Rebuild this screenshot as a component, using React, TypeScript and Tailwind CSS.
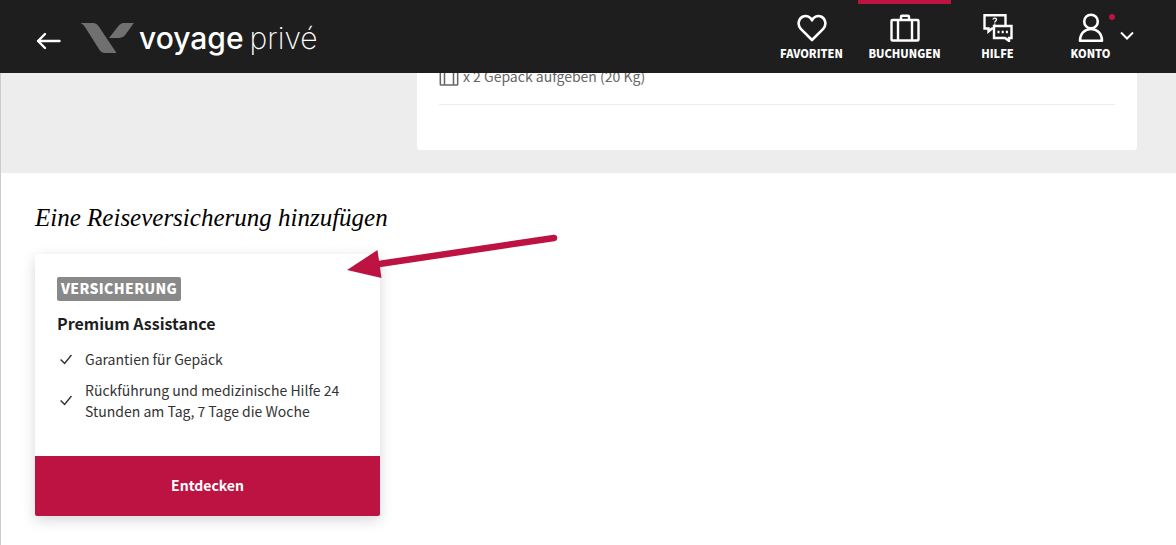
import type { ReactNode } from "react";

const guarantees = [
  "Garantien für Gepäck",
  "Rückführung und medizinische Hilfe 24 Stunden am Tag, 7 Tage die Woche",
];

const HeartIcon = () => (
  <svg width="30" height="28" viewBox="0 0 30 28" fill="none" stroke="currentColor" strokeWidth="2.6" strokeLinejoin="round">
    <path d="M15 26 3.800 14.800C0 10.800 1.500 4.400 6 2.500 9.800 1 13.600 3 15 6.300 16.400 3 20.200 1 24 2.500c4.500 1.900 6 8.300 2.200 12.300L15 26Z" />
  </svg>
);

const SuitcaseIcon = ({ className }: { className?: string }) => (
  <svg className={className} viewBox="0 0 30 28" fill="none" stroke="currentColor" strokeWidth="2.4" strokeLinejoin="round">
    <rect x="1.500" y="6" width="27" height="20.500" rx="1" />
    <path d="M8 6v20M22 6v20M11 6V2.700a1 1 0 0 1 1-1h6a1 1 0 0 1 1 1V6" />
  </svg>
);

const HelpIcon = () => (
  <svg width="30" height="28" viewBox="0 0 30 28" fill="none" stroke="currentColor" strokeWidth="2.400">
    <path d="M11 14.500H9L5.500 17.500v-3h-4V1.200H22.500V11" />
    <path d="M11 12h17.500v12H26v3L22 24H11V12Z" />
    <path d="M10 5.500c.3-2 3.600-1.800 3.500.1 0 1.400-1.800 1.300-1.800 3M11.700 9.500v1.300" strokeWidth="1.400" />
    <path d="M14.500 18h2M18.700 18h2M22.900 18h2" />
  </svg>
);

const AccountIcon = () => (
  <svg width="30" height="30" viewBox="0 0 30 30" fill="none" stroke="currentColor" strokeWidth="2.600" strokeLinejoin="round">
    <circle cx="15" cy="8.500" r="6.800" />
    <path d="M4 27.800c0-7.300 5-11.800 11-11.800s11 4.500 11 11.800H4Z" />
  </svg>
);

const CheckIcon = () => (
  <svg className="w-3 h-3 shrink-0" viewBox="0 0 12 12" fill="none" stroke="#333333" strokeWidth="1.500">
    <path d="m.6 5.500 4 4L11.500 1" />
  </svg>
);

const NavItem = ({
  label,
  active,
  children,
}: {
  label: string;
  active?: boolean;
  children: ReactNode;
}) => (
  <a
    href="#"
    aria-current={active ? "page" : undefined}
    className={`relative flex flex-col items-center w-[93px] pt-2 border-t-4 ${
      active ? "border-[#bd1342]" : "border-transparent"
    }`}
  >
    <span className="flex items-center h-8">{children}</span>
    <span className="text-[11px] leading-[18px] font-black">{label}</span>
  </a>
);

const Header = () => (
  <header className="relative z-10 h-[73px] flex justify-between bg-[#1e1e1e] text-white pl-9 pr-[39px]">
    <div className="flex items-end gap-5 pb-5">
      <button type="button" aria-label="Zurück" className="pb-[3px]">
        <svg width="25" height="18" viewBox="0 0 25 18" fill="none" stroke="currentColor" strokeWidth="2.400" strokeLinecap="round" strokeLinejoin="round">
          <path d="M23.500 9H2M9 2 2 9l7 7" />
        </svg>
      </button>
      <a href="#" className="flex items-center gap-1">
        <svg width="54" height="30" viewBox="0 0 54 30" fill="#707070" aria-hidden="true">
          <path d="M-1 0H12.500Q15.500 0 17.500 3L35.500 30H24Q20.500 30 18.500 27L4 4Q2 .8-1 0Z" />
          <path d="M53 0H42.500Q39.500 0 37 3.500L28 15H38.500Q42 15 44 12.200L50 4Q51.500 1.500 53 0Z" />
        </svg>
        <span className="flex gap-[6px] font-['Inter'] text-[30px] leading-[30px]">
          <span className="font-medium">voyage</span>
          <span className="font-extralight">privé</span>
        </span>
      </a>
    </div>
    <nav className="flex">
      <NavItem label="FAVORITEN">
        <HeartIcon />
      </NavItem>
      <NavItem label="BUCHUNGEN" active>
        <SuitcaseIcon className="w-[30px] h-7" />
      </NavItem>
      <NavItem label="HILFE">
        <HelpIcon />
      </NavItem>
      <NavItem label="KONTO">
        <AccountIcon />
        <span className="absolute top-[10px] right-[22px] size-[6px] rounded-full bg-[#bd1342]" />
        <svg className="absolute top-[27px] right-[3px]" width="14" height="9" viewBox="0 0 14 9" fill="none" stroke="currentColor" strokeWidth="2">
          <path d="m1 1.500 6 6 6-6" />
        </svg>
      </NavItem>
    </nav>
  </header>
);

const InsuranceCard = () => (
  <article className="w-[345px] rounded-xs overflow-hidden bg-white shadow-[0_4px_14px_rgba(0,0,0,0.16)]">
    <div className="px-[22px] pt-[23px] pb-[34px]">
      <span className="inline-block rounded-xs bg-[#898989] px-1 pb-[2px] text-[14px] leading-[22px] font-black tracking-wide text-white align-top">
        VERSICHERUNG
      </span>
      <h3 className="mt-[10px] text-[16px] leading-6 font-bold text-[#1e1e1e]">
        Premium Assistance
      </h3>
      <ul className="mt-[14px] space-y-[10px]">
        {guarantees.map((text) => (
          <li key={text} className="flex items-center gap-[13px] px-[3px]">
            <CheckIcon />
            <span className="text-[14px] leading-[21px] text-[#333333]">{text}</span>
          </li>
        ))}
      </ul>
    </div>
    <button type="button" className="block w-full h-[60px] pb-[2px] bg-[#bd1342] text-[14px] font-bold text-white">
      Entdecken
    </button>
  </article>
);

const App = () => {
  return (
    <div className="min-h-screen bg-white border-l border-[#cccccc] font-['Noto_Sans_CJK_SC','Open_Sans',sans-serif]">
      <div className="-ml-px">
        <Header />
      </div>
      <section className="bg-[#ededed] pr-[39px] pb-[23px] flow-root">
        <div className="-mt-2 ml-[416px] rounded-[3px] bg-white px-[22px] pb-[45px]">
          <div className="flex items-center gap-1 pb-4 border-b border-[#ededed] text-[14px] leading-[23px] text-[#666666]">
            <SuitcaseIcon className="w-5 h-[18px]" />
            <span>x 2 Gepäck aufgeben (20 Kg)</span>
          </div>
        </div>
      </section>
      <main className="relative px-[34px] pt-[29px] pb-7">
        <h2 className="font-['Liberation_Serif',serif] italic text-[25px] leading-8 text-black">
          Eine Reiseversicherung hinzufügen
        </h2>
        <div className="mt-5">
          <InsuranceCard />
        </div>
        <svg className="absolute left-[345px] top-[60px]" width="214" height="46" viewBox="0 0 214 46" aria-hidden="true">
          <path d="M33 31 208 5" stroke="#bd1342" strokeWidth="6.500" strokeLinecap="round" />
          <path d="M1 37 31.500 17 35.500 45Z" fill="#bd1342" />
        </svg>
      </main>
    </div>
  );
};
export default App;
